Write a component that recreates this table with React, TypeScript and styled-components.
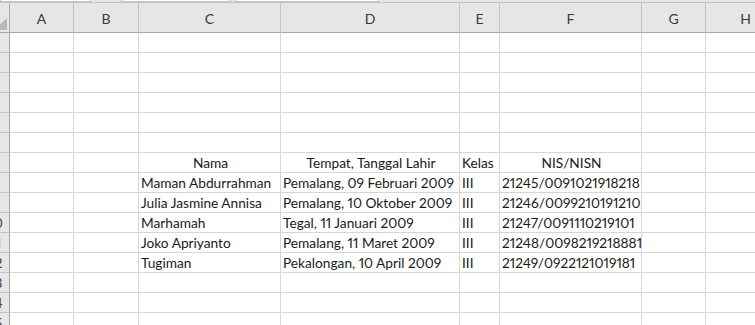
import React from 'react'
import styled, { createGlobalStyle } from 'styled-components'

const GlobalStyle = createGlobalStyle`
  html, body {
    margin: 0;
    padding: 0;
    background: #ffffff;
    overflow: hidden;
  }
`

const GRID = '#d6d6d6'
const HEAD_BG = '#e6e6e6'
const HEAD_LINE = '#c4c4c4'
const HEAD_EDGE = '#a8a8a8'

const Sheet = styled.div`
  display: flex;
  flex-direction: column;
  width: 755px;
  height: 325px;
  overflow: hidden;
  font-family: Lato, 'Open Sans', sans-serif;
  font-variant-numeric: proportional-nums;
`

// bits of the formula bar that peek in at the very top
const TopStrip = styled.div`
  display: flex;
  height: 3px;
  background: ${HEAD_BG};
  border-bottom: 1px solid ${HEAD_LINE};
  box-sizing: border-box;
  flex-shrink: 0;
`

const StripBox = styled.div<{ $w: number; $gap: number }>`
  width: ${(p) => p.$w}px;
  margin-left: ${(p) => p.$gap}px;
  background: #ffffff;
  border: 1px solid ${HEAD_LINE};
  border-top: none;
  box-sizing: border-box;
`

const Row = styled.div<{ $h: number }>`
  display: flex;
  height: ${(p) => p.$h}px;
  flex-shrink: 0;
`

const Corner = styled.div`
  width: 10px;
  flex-shrink: 0;
  display: flex;
  align-items: flex-end;
  justify-content: flex-end;
  padding: 0 2px 2px 0;
  box-sizing: border-box;
  background: ${HEAD_BG};
  border-right: 1px solid ${HEAD_EDGE};
  border-bottom: 1px solid ${HEAD_EDGE};
`

const CornerMark = styled.div`
  width: 0;
  height: 0;
  border-left: 13px solid transparent;
  border-bottom: 12px solid #b9b9b9;
`

const ColHead = styled.div<{ $w: number }>`
  width: ${(p) => p.$w}px;
  flex-shrink: 0;
  display: flex;
  align-items: center;
  justify-content: center;
  padding-top: 2px;
  box-sizing: border-box;
  background: ${HEAD_BG};
  border-right: 1px solid ${HEAD_LINE};
  border-bottom: 1px solid ${HEAD_EDGE};
  color: #3a3a3a;
  font-size: 14px;
`

const RowHead = styled.div`
  width: 10px;
  flex-shrink: 0;
  overflow: hidden;
  display: flex;
  align-items: center;
  box-sizing: border-box;
  background: ${HEAD_BG};
  border-right: 1px solid ${HEAD_EDGE};
  border-bottom: 1px solid ${HEAD_LINE};
  color: #3a3a3a;
  font-size: 13px;
`

// the row header is wider than what fits on screen, only the tail of the number shows
const RowNum = styled.span`
  display: block;
  flex-shrink: 0;
  width: 26px;
  margin-left: -17px;
  text-align: center;
`

const Cell = styled.div<{ $w: number; $align?: 'left' | 'center' }>`
  width: ${(p) => p.$w}px;
  flex-shrink: 0;
  display: flex;
  align-items: flex-end;
  justify-content: ${(p) => (p.$align === 'center' ? 'center' : 'flex-start')};
  padding: 0 0 1px 2px;
  box-sizing: border-box;
  border-right: 1px solid ${GRID};
  border-bottom: 1px solid ${GRID};
  color: #1a1a1a;
  font-size: 13.7px;
  line-height: 16px;
  white-space: nowrap;
`

const columns = [
  { key: 'A', w: 64 },
  { key: 'B', w: 65 },
  { key: 'C', w: 142 },
  { key: 'D', w: 179 },
  { key: 'E', w: 40 },
  { key: 'F', w: 142 },
  { key: 'G', w: 64 },
  { key: 'H', w: 80 },
]

type Align = 'left' | 'center'
type CellData = { text: string; align?: Align }

const table: Record<number, Record<string, CellData>> = {
  7: {
    C: { text: 'Nama', align: 'center' },
    D: { text: 'Tempat, Tanggal Lahir', align: 'center' },
    E: { text: 'Kelas' },
    F: { text: 'NIS/NISN', align: 'center' },
  },
  8: {
    C: { text: 'Maman Abdurrahman' },
    D: { text: 'Pemalang, 09 Februari 2009' },
    E: { text: 'III' },
    F: { text: '21245/0091021918218' },
  },
  9: {
    C: { text: 'Julia Jasmine Annisa' },
    D: { text: 'Pemalang, 10 Oktober 2009' },
    E: { text: 'III' },
    F: { text: '21246/0099210191210' },
  },
  10: {
    C: { text: 'Marhamah' },
    D: { text: 'Tegal, 11 Januari 2009' },
    E: { text: 'III' },
    F: { text: '21247/0091110219101' },
  },
  11: {
    C: { text: 'Joko Apriyanto' },
    D: { text: 'Pemalang, 11 Maret 2009' },
    E: { text: 'III' },
    F: { text: '21248/0098219218881' },
  },
  12: {
    C: { text: 'Tugiman' },
    D: { text: 'Pekalongan, 10 April 2009' },
    E: { text: 'III' },
    F: { text: '21249/0922121019181' },
  },
}

const rowNumbers = Array.from({ length: 15 }, (_, i) => i + 1)

const App: React.FC = () => {
  return (
    <>
      <GlobalStyle />
      <Sheet>
        <TopStrip>
          <StripBox $w={91} $gap={0} />
          <StripBox $w={110} $gap={30} />
          <StripBox $w={144} $gap={4} />
        </TopStrip>
        <Row $h={30}>
          <Corner>
            <CornerMark />
          </Corner>
          {columns.map((c) => (
            <ColHead key={c.key} $w={c.w}>
              {c.key}
            </ColHead>
          ))}
        </Row>
        {rowNumbers.map((n) => {
          const data = table[n] || {}
          return (
            <Row key={n} $h={20}>
              <RowHead>
                <RowNum>{n}</RowNum>
              </RowHead>
              {columns.map((c) => {
                const cell = data[c.key]
                return (
                  <Cell key={c.key} $w={c.w} $align={cell?.align}>
                    {cell?.text}
                  </Cell>
                )
              })}
            </Row>
          )
        })}
      </Sheet>
    </>
  )
}

export default App
